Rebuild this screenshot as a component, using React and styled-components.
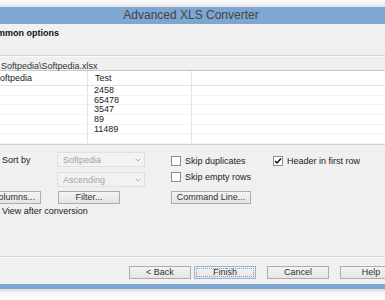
import React from "react";
import styled, { createGlobalStyle } from "styled-components";

const GlobalStyle = createGlobalStyle`
  html, body {
    margin: 0;
    padding: 0;
    background: #ffffff;
    overflow: hidden;
  }
  body {
    font-family: "Liberation Sans", Arial, sans-serif;
    font-size: 9px;
    color: #222;
  }
`;

const Page = styled.div`
  width: 385px;
  height: 300px;
  overflow: hidden;
  display: flex;
  flex-direction: column;
`;

const TopShade = styled.div`
  height: 7px;
  flex-shrink: 0;
  background: linear-gradient(#fbfbfb, #e6e6e6);
`;

const BottomShade = styled.div`
  flex: 1;
  background: linear-gradient(#dadada, #f6f6f6 4px, #ffffff);
`;

const Window = styled.div`
  margin-left: -14px;
  width: 440px;
  flex-shrink: 0;
  display: flex;
  flex-direction: column;
  background: #f0f0f0;
  border-bottom: 5px solid #7ea6d3;
`;

const TitleBar = styled.div`
  height: 17px;
  line-height: 17px;
  background: #7ea6d3;
  color: #444;
  font-size: 12px;
  text-align: center;
  padding-right: 30px;
`;

const Header = styled.div`
  height: 32px;
  padding: 4px 0 0 0;
  box-sizing: border-box;
  border-bottom: 1px solid #d3d3d3;
  background: #f0f0f0;
`;

const HeaderTitle = styled.div`
  margin-left: -1px;
  font-weight: bold;
  font-size: 9px;
  line-height: 11px;
  color: #111;
`;

const PathRow = styled.div`
  height: 15px;
  box-sizing: border-box;
  padding: 4px 0 0 15px;
  line-height: 10px;
  border-top: 1px solid #fafafa;
  border-bottom: 1px solid #c6c6c6;
  color: #333;
`;

const Table = styled.div`
  background: #ffffff;
  border-bottom: 1px solid #d0d0d0;
`;

const TableRow = styled.div`
  display: grid;
  grid-template-columns: 102px 104px 1fr;
  height: ${(p) => p.$h}px;
  border-bottom: 1px solid ${(p) => (p.$head ? "#e2e2e2" : "#f1f3f6")};
  box-sizing: border-box;
`;

const Cell = styled.div`
  padding-left: ${(p) => p.$pad || 0}px;
  border-right: 1px solid #e4e4e4;
  display: flex;
  align-items: center;
  color: #222;
  line-height: 9px;
  &:last-child {
    border-right: none;
  }
`;

const Options = styled.div`
  height: 112px;
  box-sizing: border-box;
  padding-top: 7px;
  border-bottom: 1px solid #d8d8d8;
`;

const Row = styled.div`
  display: grid;
  grid-template-columns: 71px 88px 26px 102px 1fr;
  height: ${(p) => p.$h}px;
  margin-top: ${(p) => p.$mt || 0}px;
  align-items: center;
`;

const Label = styled.span`
  padding-left: ${(p) => p.$pad || 0}px;
  color: #222;
  white-space: nowrap;
`;

const Combo = styled.div`
  height: 15px;
  box-sizing: border-box;
  border: 1px solid #e0e0e0;
  background: #f2f2f2;
  display: flex;
  align-items: center;
  justify-content: space-between;
  padding: 0 3px 0 5px;
  color: #a3a3a3;
`;

const Chevron = () => (
  <svg width="6" height="4" viewBox="0 0 6 4">
    <path d="M0.5 0.5 L3 3 L5.5 0.5" fill="none" stroke="#b0b0b0" strokeWidth="1" />
  </svg>
);

const Check = styled.label`
  display: flex;
  align-items: center;
  gap: 4px;
  margin-top: ${(p) => p.$mt || 0}px;
  margin-left: ${(p) => p.$ml || 0}px;
  white-space: nowrap;
  color: #222;
`;

const Box = styled.span`
  width: 10px;
  height: 10px;
  box-sizing: border-box;
  border: 1px solid #8d8d8d;
  background: #ffffff;
  display: flex;
  align-items: center;
  justify-content: center;
  flex-shrink: 0;
`;

const CheckBox = ({ checked, children, mt, ml }) => (
  <Check $mt={mt} $ml={ml}>
    <Box>
      {checked && (
        <svg width="8" height="8" viewBox="0 0 8 8">
          <path d="M1 4 L3 6 L7 1.5" fill="none" stroke="#111" strokeWidth="1.5" />
        </svg>
      )}
    </Box>
    {children}
  </Check>
);

const Button = styled.button`
  width: ${(p) => p.$w || 62}px;
  height: 13px;
  margin-left: ${(p) => p.$ml || 0}px;
  padding: 0;
  box-sizing: border-box;
  font-family: "Liberation Sans", Arial, sans-serif;
  font-size: 9px;
  color: #333;
  background: linear-gradient(#f4f4f4, #e4e4e4);
  border: 1px solid ${(p) => (p.$focus ? "#8cb8e6" : "#adadad")};
  outline: ${(p) => (p.$focus ? "1px dotted #9a9a9a" : "none")};
  outline-offset: -3px;
  line-height: 11px;
  white-space: nowrap;
`;

const Footer = styled.div`
  height: 27px;
  box-sizing: border-box;
  border-top: 1px solid #fbfbfb;
  padding: 8px 0 0 143px;
  display: flex;
  align-items: flex-start;
`;

const values = ["2458", "65478", "3547", "89", "11489", ""];

export default function App() {
  return (
    <Page>
      <GlobalStyle />
      <TopShade />
      <Window>
        <TitleBar>Advanced XLS Converter</TitleBar>
        <Header>
          <HeaderTitle>Common options</HeaderTitle>
        </Header>
        <PathRow>Softpedia\Softpedia.xlsx</PathRow>
        <Table>
          <TableRow $h={15} $head>
            <Cell $pad={8}>Softpedia</Cell>
            <Cell $pad={7}>Test</Cell>
            <Cell />
          </TableRow>
          {values.map((v, i) => (
            <TableRow key={i} $h={9.7}>
              <Cell />
              <Cell $pad={6}>{v}</Cell>
              <Cell />
            </TableRow>
          ))}
        </Table>
        <Options>
          <Row $h={15}>
            <Label $pad={16}>Sort by</Label>
            <Combo>
              Softpedia
              <Chevron />
            </Combo>
            <span />
            <CheckBox mt={3}>Skip duplicates</CheckBox>
            <CheckBox mt={3} checked>
              Header in first row
            </CheckBox>
          </Row>
          <Row $h={15} $mt={5}>
            <span />
            <Combo>
              Ascending
              <Chevron />
            </Combo>
            <span />
            <CheckBox mt={-6}>Skip empty rows</CheckBox>
            <span />
          </Row>
          <Row $h={13} $mt={4}>
            <Button $w={55}>Columns...</Button>
            <Button $ml={1}>Filter...</Button>
            <span />
            <Button $w={80}>Command Line...</Button>
            <span />
          </Row>
          <Row $h={10} $mt={2}>
            <CheckBox ml={2}>View after conversion</CheckBox>
          </Row>
        </Options>
        <Footer>
          <Button>&lt; Back</Button>
          <Button $ml={3} $focus>
            Finish
          </Button>
          <Button $ml={11}>Cancel</Button>
          <Button $ml={11}>Help</Button>
        </Footer>
      </Window>
      <BottomShade />
    </Page>
  );
}
